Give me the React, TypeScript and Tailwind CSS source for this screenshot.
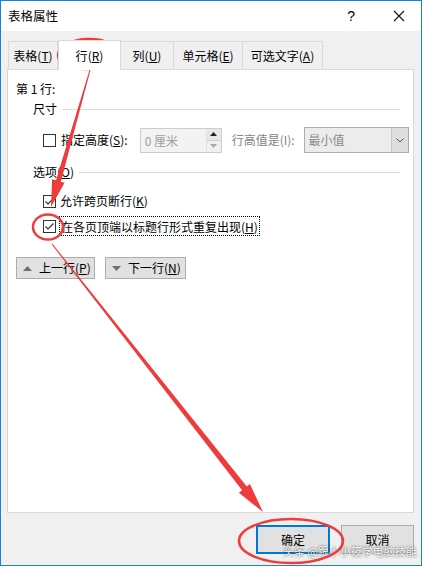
import React from 'react';

type Pt = [number, number];

// tapered arrow polygon from start to tip
function arrowPoints(s: Pt, t: Pt, w0: number, w1: number, hw: number, hl: number) {
  const dx = t[0] - s[0];
  const dy = t[1] - s[1];
  const len = Math.hypot(dx, dy);
  const ux = dx / len;
  const uy = dy / len;
  const nx = -uy;
  const ny = ux;
  const bx = t[0] - ux * hl;
  const by = t[1] - uy * hl;
  const pts: Pt[] = [
    [s[0] + (nx * w0) / 2, s[1] + (ny * w0) / 2],
    [bx + (nx * w1) / 2, by + (ny * w1) / 2],
    [bx + (nx * hw) / 2, by + (ny * hw) / 2],
    t,
    [bx - (nx * hw) / 2, by - (ny * hw) / 2],
    [bx - (nx * w1) / 2, by - (ny * w1) / 2],
    [s[0] - (nx * w0) / 2, s[1] - (ny * w0) / 2],
  ];
  return pts.map((p) => `${p[0].toFixed(1)},${p[1].toFixed(1)}`).join(' ');
}

function Checkbox({ checked }: { checked?: boolean }) {
  return (
    <svg width="13" height="13" viewBox="0 0 13 13" className="shrink-0">
      <rect x="0.5" y="0.5" width="12" height="12" fill="white" stroke="#333" />
      {checked && <path d="M2.5 6.5 L5 9 L10.5 3.5" fill="none" stroke="#333" strokeWidth="1.2" />}
    </svg>
  );
}

function Tab({ label, keyChar, active, width }: { label: string; keyChar: string; active?: boolean; width: string }) {
  return (
    <div
      className={
        active
          ? `${width} h-[30px] bg-white border border-b-0 border-[#d9d9d9] -mb-px relative z-10 flex items-center justify-center`
          : `${width} h-[28px] bg-[#f0f0f0] border border-b-0 border-[#d9d9d9] -ml-px first:ml-0 flex items-center justify-center`
      }
    >
      <span className="whitespace-nowrap">
        {label}(<u>{keyChar}</u>)
      </span>
    </div>
  );
}

export default function App() {
  return (
    <div className="w-[423px] h-[567px] bg-white relative overflow-hidden font-['Noto_Sans_CJK_SC','Noto_Sans',sans-serif] text-[12px] leading-4 text-black">
      <div className="w-[422px] h-[566px] border border-[#1883d7] bg-[#f0f0f0] flex flex-col">
        {/* title bar */}
        <div className="h-[30px] bg-white flex items-center pl-[7px] shrink-0">
          <span className="text-[12.5px]">表格属性</span>
          <span className="ml-auto mr-[38px] text-[14px] font-['Liberation_Sans',sans-serif]">?</span>
          <svg width="12" height="12" viewBox="0 0 12 12" className="mr-[16px]">
            <path d="M1 1 L11 11 M11 1 L1 11" stroke="#111" strokeWidth="1.1" />
          </svg>
        </div>

        <div className="flex-1 pl-[6px] pr-[7px] pt-[9px] flex flex-col">
          {/* tabs */}
          <div className="flex items-end pl-px">
            <Tab label="表格" keyChar="T" width="w-[50px]" />
            <Tab label="行" keyChar="R" width="w-[63px]" active />
            <Tab label="列" keyChar="U" width="w-[54px]" />
            <Tab label="单元格" keyChar="E" width="w-[70px]" />
            <Tab label="可选文字" keyChar="A" width="w-[81px]" />
          </div>

          {/* panel */}
          <div className="w-[407px] h-[444px] bg-white border border-[#d9d9d9] px-[8px] pt-[11px] flex flex-col whitespace-nowrap">
            <div>第 1 行:</div>

            <div className="mt-[4px] ml-[17px] flex items-center">
              <span>尺寸</span>
              <div className="flex-1 h-px bg-[#dcdcdc] ml-[5px] mr-[5px]" />
            </div>

            <div className="mt-[10px] ml-[27px] h-[26px] flex items-center">
              <Checkbox />
              <span className="ml-[5px] shrink-0">
                指定高度(<u>S</u>):
              </span>
              <div className="ml-[12px] w-[82px] h-[25px] shrink-0 border border-[#cccccc] bg-[#f3f3f3] flex">
                <span className="flex-1 pl-[4px] leading-[23px] text-[#a0a0a0]">0 厘米</span>
                <div className="w-[15px] flex flex-col border-l border-[#e2e2e2]">
                  <div className="flex-1 bg-[#e8e8e8] border-b border-[#d0d0d0] flex items-center justify-center">
                    <svg width="7" height="4" viewBox="0 0 7 4">
                      <path d="M0 4 L3.5 0 L7 4 Z" fill="#222" />
                    </svg>
                  </div>
                  <div className="flex-1 bg-[#f0f0f0] flex items-center justify-center">
                    <svg width="7" height="4" viewBox="0 0 7 4">
                      <path d="M0 0 L3.5 4 L7 0 Z" fill="#a8a8a8" />
                    </svg>
                  </div>
                </div>
              </div>
              <span className="ml-[10px] shrink-0 text-[#838383]">行高值是(I):</span>
              <div className="ml-[9px] w-[105px] h-[26px] shrink-0 border border-[#adadad] bg-[#ececec] flex">
                <span className="flex-1 pl-[4px] leading-[24px] text-[#8a8a8a]">最小值</span>
                <div className="w-[17px] bg-[#dedede] border-l border-[#c8c8c8] flex items-center justify-center">
                  <svg width="8" height="5" viewBox="0 0 8 5">
                    <path d="M0.5 0.5 L4 4 L7.5 0.5" fill="none" stroke="#555" />
                  </svg>
                </div>
              </div>
            </div>

            <div className="mt-[11px] ml-[17px] flex items-center">
              <span>
                选项(<u>O</u>)
              </span>
              <div className="flex-1 h-px bg-[#dcdcdc] ml-[5px] mr-[5px]" />
            </div>

            <div className="mt-[13px] ml-[27px] flex items-center">
              <Checkbox checked />
              <span className="ml-[4px]">
                允许跨页断行(<u>K</u>)
              </span>
            </div>

            <div className="mt-[7px] ml-[27px] h-[20px] flex items-center">
              <Checkbox checked />
              <span className="ml-[3px] h-[20px] leading-[19px] border border-dotted border-black px-px">
                在各页顶端以标题行形式重复出现(<u>H</u>)
              </span>
            </div>

            <div className="mt-[21px] flex gap-[10px]">
              <div className="w-[79px] h-[22px] bg-[#e1e1e1] border border-[#adadad] flex items-center pl-[6px] gap-[7px]">
                <svg width="9" height="5" viewBox="0 0 9 5">
                  <path d="M0 5 L4.5 0 L9 5 Z" fill="#707070" />
                </svg>
                <span>
                  上一行(<u>P</u>)
                </span>
              </div>
              <div className="w-[81px] h-[22px] bg-[#e1e1e1] border border-[#adadad] flex items-center pl-[6px] gap-[7px]">
                <svg width="9" height="5" viewBox="0 0 9 5">
                  <path d="M0 0 L4.5 5 L9 0 Z" fill="#707070" />
                </svg>
                <span>
                  下一行(<u>N</u>)
                </span>
              </div>
            </div>
          </div>

          {/* dialog buttons */}
          <div className="mt-[12px] flex justify-end gap-[11px]">
            <div className="w-[74px] h-[29px] bg-[#e1e1e1] border-2 border-[#0078d7] flex items-center justify-center">
              确定
            </div>
            <div className="w-[73px] h-[29px] bg-[#e1e1e1] border border-[#adadad] flex items-center justify-center">
              取消
            </div>
          </div>
        </div>
      </div>

      {/* watermark */}
      <div className="absolute left-[283px] top-[543px] text-[11px] leading-4 text-white/95 [text-shadow:0_0_2px_rgba(0,0,0,0.75)] whitespace-nowrap">
        头条 @跟小小筱学电脑技能
      </div>

      {/* red annotations */}
      <svg className="absolute left-0 top-0 pointer-events-none" width="423" height="567" viewBox="0 0 423 567">
        <ellipse cx="87.5" cy="54" rx="29.5" ry="15" fill="none" stroke="#ee3b3b" strokeWidth="2.5" transform="rotate(-3 87.5 54)" />
        <ellipse cx="48" cy="227" rx="15" ry="12.5" fill="none" stroke="#ee3b3b" strokeWidth="2.5" />
        <ellipse cx="291" cy="541" rx="52" ry="22" fill="none" stroke="#ee3b3b" strokeWidth="2.5" />
        <polygon points={arrowPoints([90, 70], [51, 207], 1, 5, 13, 27)} fill="#ee3b3b" />
        <polygon points={arrowPoints([52, 244], [263, 512], 1, 6, 14, 30)} fill="#ee3b3b" />
      </svg>
    </div>
  );
}
